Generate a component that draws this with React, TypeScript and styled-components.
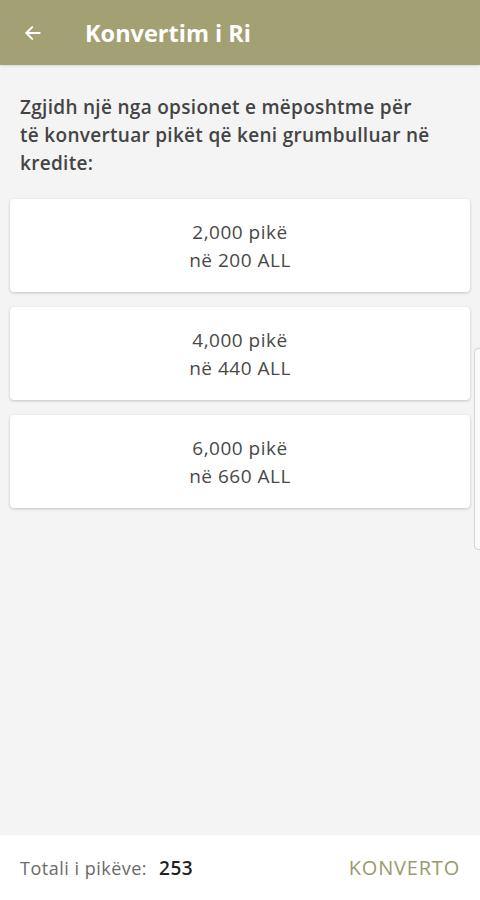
import React from "react";
import styled, { createGlobalStyle } from "styled-components";

const GlobalStyle = createGlobalStyle`
  html, body { margin: 0; padding: 0; }
  body { font-family: "Open Sans", "Noto Sans", sans-serif; background: #f4f4f4; }
`;

const Page = styled.div`
  position: relative;
  width: 480px;
  height: 900px;
  display: flex;
  flex-direction: column;
  background: #f4f4f4;
  overflow: hidden;
`;

const Header = styled.header`
  height: 65px;
  flex: none;
  background: #a3a073;
  display: flex;
  align-items: center;
  padding-left: 22px;
  gap: 41px;
  box-shadow: 0 1px 3px rgba(0, 0, 0, 0.12);
`;

const BackButton = styled.button`
  border: 0;
  background: none;
  padding: 0;
  width: 22px;
  height: 22px;
  display: flex;
  align-items: center;
  justify-content: center;
  color: #fff;
`;

const Title = styled.h1`
  margin: 0;
  color: #fff;
  font-size: 23.5px;
  font-weight: 700;
`;

const Content = styled.main`
  flex: 1;
  padding: 0 10px;
  display: flex;
  flex-direction: column;
`;

const Intro = styled.p`
  margin: 28px 10px 22px;
  max-width: 410px;
  font-size: 19px;
  line-height: 28px;
  font-weight: 600;
  letter-spacing: 0.3px;
  color: #444;
`;

const OptionList = styled.div`
  display: flex;
  flex-direction: column;
  gap: 15px;
`;

const OptionCard = styled.button`
  height: 93px;
  border: 0;
  border-radius: 4px;
  background: #fff;
  box-shadow: 0 1px 3px rgba(0, 0, 0, 0.2);
  display: flex;
  flex-direction: column;
  align-items: center;
  justify-content: center;
  font-family: inherit;
  font-size: 19px;
  letter-spacing: 0.5px;
  line-height: 28px;
  color: #484848;
`;

const Footer = styled.footer`
  height: 65px;
  flex: none;
  background: #fff;
  display: flex;
  align-items: center;
  justify-content: space-between;
  padding: 0 20px;
`;

const Total = styled.div`
  font-size: 18px;
  letter-spacing: 0.5px;
  color: #6a6a6a;
`;

const TotalValue = styled.span`
  margin-left: 12px;
  color: #222;
  font-weight: 600;
  font-size: 19px;
`;

const ActionButton = styled.button`
  border: 0;
  background: none;
  padding: 0;
  font-family: inherit;
  font-size: 20px;
  letter-spacing: 0.8px;
  color: #9a9a6a;
`;

const EdgeHandle = styled.div`
  position: absolute;
  right: -4px;
  top: 348px;
  width: 8px;
  height: 200px;
  border: 1px solid #d4d4d4;
  border-radius: 4px;
  background: #fafafa;
`;

const options = [
  { points: "2,000", amount: "200" },
  { points: "4,000", amount: "440" },
  { points: "6,000", amount: "660" },
];

export default function App() {
  return (
    <>
      <GlobalStyle />
      <Page>
        <Header>
          <BackButton aria-label="Back">
            <svg width="20" height="20" viewBox="0 0 24 24" fill="none" stroke="#fff" strokeWidth="2.4" strokeLinecap="round" strokeLinejoin="round">
              <path d="M20 12H4" />
              <path d="M11 5l-7 7 7 7" />
            </svg>
          </BackButton>
          <Title>Konvertim i Ri</Title>
        </Header>
        <Content>
          <Intro>
            Zgjidh një nga opsionet e mëposhtme për të konvertuar pikët që keni grumbulluar në kredite:
          </Intro>
          <OptionList>
            {options.map((o) => (
              <OptionCard key={o.points}>
                <span>{o.points} pikë</span>
                <span>në {o.amount} ALL</span>
              </OptionCard>
            ))}
          </OptionList>
        </Content>
        <Footer>
          <Total>
            Totali i pikëve:<TotalValue>253</TotalValue>
          </Total>
          <ActionButton>KONVERTO</ActionButton>
        </Footer>
        <EdgeHandle />
      </Page>
    </>
  );
}
